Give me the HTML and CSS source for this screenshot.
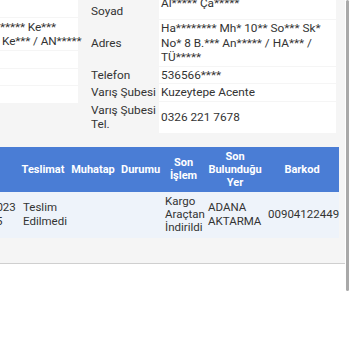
FILE: index.html
```html
<!DOCTYPE html>
<html lang="tr">
<head>
    <meta charset="UTF-8">
    <meta name="viewport" content="width=device-width, initial-scale=1.0">
    <title>Gönderi Takip</title>
    <link rel="stylesheet" href="styles.css">
</head>
<body>
    <div class="viewport">
        <div class="panel">
            <div class="info">
                <table class="info-table sender">
                    <tr><td class="value tall">&nbsp;</td></tr>
                    <tr><td class="value addr"><span class="line first">***** Ke***</span><span class="line">Ke*** / AN*****</span></td></tr>
                    <tr><td class="value">&nbsp;</td></tr>
                    <tr><td class="value">&nbsp;</td></tr>
                    <tr><td class="value">&nbsp;</td></tr>
                </table>
                <table class="info-table receiver">
                    <tr><td class="label">Alıcı Ad<br>Soyad</td><td class="value">Al***** Ça*****</td></tr>
                    <tr><td class="label">Adres</td><td class="value">Ha******** Mh* 10** So*** Sk* No* 8 B.*** An***** / HA*** / TÜ*****</td></tr>
                    <tr><td class="label">Telefon</td><td class="value">536566****</td></tr>
                    <tr><td class="label">Varış Şubesi</td><td class="value">Kuzeytepe Acente</td></tr>
                    <tr><td class="label">Varış Şubesi<br>Tel.</td><td class="value">0326 221 7678</td></tr>
                </table>
            </div>

            <table class="moves">
                <thead>
                    <tr>
                        <th class="c-date">Tarih</th>
                        <th class="c-teslim">Teslimat</th>
                        <th class="c-muhatap">Muhatap</th>
                        <th class="c-durum">Durumu</th>
                        <th class="c-islem">Son İşlem</th>
                        <th class="c-yer">Son Bulunduğu Yer</th>
                        <th class="c-barkod">Barkod</th>
                    </tr>
                </thead>
                <tbody>
                    <tr>
                        <td>11.10.2023 14:22:35</td>
                        <td class="first-col">Teslim Edilmedi</td>
                        <td></td>
                        <td></td>
                        <td>Kargo Araçtan İndirildi</td>
                        <td>ADANA AKTARMA</td>
                        <td>00904122449</td>
                    </tr>
                </tbody>
            </table>
        </div>
        <div class="scroll-thumb"></div>
    </div>
</body>
</html>
```

FILE: styles.css
```css
html, body { margin: 0; padding: 0; background: #fff; }
body { font-family: Roboto, "Noto Sans", Arial, sans-serif; color: #333; }
.viewport { width: 350px; height: 350px; overflow: hidden; position: relative; }
.panel { width: 345px; background: #f5f5f5; border-bottom: 1px solid #cfcfcf; padding-bottom: 25px; overflow: hidden; }
.info { display: flex; gap: 11px; margin-top: -13px; align-items: flex-start; }
.info-table { border-collapse: separate; border-spacing: 0 1px; font-size: 11.8px; line-height: 14.5px; table-layout: fixed; }
.sender { width: 78px; flex: none; }
.receiver { flex: 1; margin-right: 9px; }
.info-table td { padding: 1px 2px; vertical-align: middle; overflow: hidden; }
.info-table .label { width: 68px; padding-right: 0; white-space: nowrap; background: #f5f5f5; }
.info-table .value { background: #fff; }
.sender .tall { height: 27px; }
.sender .addr { height: 30px; white-space: nowrap; overflow: visible; letter-spacing: -0.1px; }
.sender .line { display: block; }
.sender .first { margin-left: -2px; }
.moves { width: 384px; margin-left: -45px; margin-top: 13px; border-collapse: collapse; table-layout: fixed; }
.moves th { background: #4a7dd5; color: #fff; font-size: 11px; font-weight: bold; line-height: 13px; padding: 3px 3px; height: 39px; text-align: center; }
.moves th.c-date { text-align: left; }
.moves td { background: #eef3fa; font-size: 11.5px; line-height: 13.3px; padding: 3px 3px; height: 40px; vertical-align: middle; }
.moves td.first-col { padding-left: 5px; }
.c-date { width: 57px; }
.c-teslim { width: 44px; }
.c-muhatap { width: 44px; }
.c-durum { width: 38px; }
.c-islem { width: 37px; }
.c-yer { width: 54px; }
.c-barkod { width: 68px; }
.scroll-thumb { position: absolute; top: 0; right: 1px; width: 3px; height: 291px; background: #a9a9a9; border-radius: 2px; }
```
